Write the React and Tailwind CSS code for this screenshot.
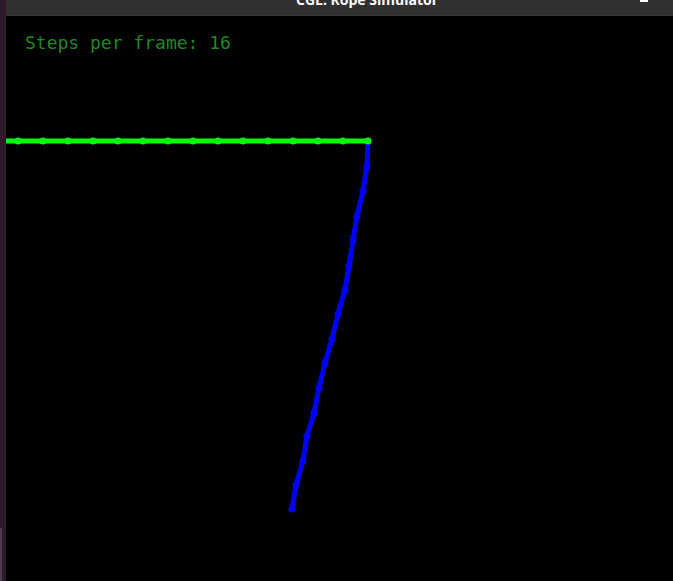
const ROPE_A = Array.from({ length: 15 }, (_, i) => [18 + i * 25, 141]);

// blue rope, points read off the screenshot (page coords)
const ROPE_B = [
  [368, 141], [367, 166], [363, 191], [357, 216], [353, 240], [349, 266],
  [345, 290], [338, 314], [332, 339], [325, 363], [319, 388], [314, 413],
  [307, 436], [303, 461], [296, 485], [292, 509],
];

const OFFSET_X = 6;
const OFFSET_Y = 16;

function Rope({ points, color, lead, width }) {
  const pts = points.map(([x, y]) => `${x - OFFSET_X},${y - OFFSET_Y}`).join(" ");
  return (
    <g>
      <polyline points={pts} fill="none" stroke={color} strokeWidth={width} strokeLinejoin="round" />
      {points.map(([x, y], i) => (
        <circle key={i} cx={x - OFFSET_X} cy={y - OFFSET_Y} r="3.5" fill={color} />
      ))}
      {lead && <polyline points={lead} fill="none" stroke={color} strokeWidth={width} />}
    </g>
  );
}

export default function App() {
  return (
    <div className="w-[673px] h-[581px] flex bg-black overflow-hidden">
      {/* desktop edge on the left */}
      <div className="w-[6px] h-full flex flex-col bg-[#2d1a2b]">
        <div className="flex-1" />
        <div className="h-[53px] w-[2px] bg-[#4b3b4d]" />
      </div>

      <div className="flex-1 flex flex-col">
        <div className="h-[16px] bg-[#303030] border-b border-[#3a3a3a] flex overflow-hidden relative">
          <span
            className="pl-[290px] -mt-[10px] text-[14px] font-bold text-white leading-[20px]"
            style={{ fontFamily: '"Open Sans", "DejaVu Sans", sans-serif' }}
          >
            CGL: Rope Simulator
          </span>
          <div className="absolute left-[634px] top-0 w-[8px] h-[2px] bg-white" />
        </div>

        <div className="flex-1 relative">
          <p
            className="absolute left-[19px] top-[16px] text-[18px] text-[#1e8a1e] leading-[22px]"
            style={{ fontFamily: '"DejaVu Sans Mono", "Liberation Mono", monospace' }}
          >
            Steps per frame: 16
          </p>
          <svg className="absolute inset-0" width="667" height="565">
            <Rope points={ROPE_B} color="#0000ff" width="5" />
            <Rope
              points={ROPE_A}
              color="#00ff00"
              width="5"
              lead={`0,${141 - OFFSET_Y} ${18 - OFFSET_X},${141 - OFFSET_Y}`}
            />
          </svg>
        </div>
      </div>
    </div>
  );
}
